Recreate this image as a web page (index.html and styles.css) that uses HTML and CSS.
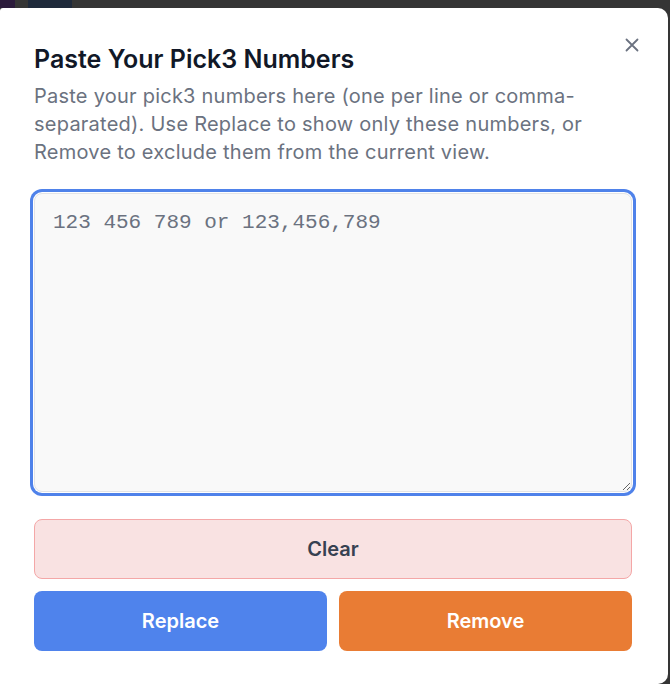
FILE: index.html
```html
<!DOCTYPE html>
<html lang="en">
<head>
<meta charset="utf-8">
<title>Paste Your Pick3 Numbers</title>
<link rel="stylesheet" href="styles.css">
</head>
<body>
<div class="backdrop">
  <div class="behind">
    <span class="chip chip-purple"></span>
    <span class="chip chip-navy"></span>
  </div>
  <div class="dialog" role="dialog" aria-labelledby="dlg-title">
    <button class="close" aria-label="Close">
      <svg width="16" height="16" viewBox="0 0 16 16" fill="none" stroke="#6b7280" stroke-width="1.8" stroke-linecap="round">
        <path d="M2.5 2.5 L13.5 13.5 M13.5 2.5 L2.5 13.5"/>
      </svg>
    </button>
    <h2 id="dlg-title" class="title">Paste Your Pick3 Numbers</h2>
    <p class="desc">Paste your pick3 numbers here (one per line or comma-separated). Use Replace to show only these numbers, or Remove to exclude them from the current view.</p>
    <textarea class="numbers" placeholder="123 456 789 or 123,456,789" autofocus></textarea>
    <div class="actions">
      <button class="btn btn-clear">Clear</button>
      <div class="row">
        <button class="btn btn-replace">Replace</button>
        <button class="btn btn-remove">Remove</button>
      </div>
    </div>
  </div>
</div>
</body>
</html>
```
FILE: styles.css
```css
html, body {
  margin: 0;
  padding: 0;
  background: #353535;
  height: 100%;
  overflow: hidden;
}
body {
  font-family: Inter, "Noto Sans", "Liberation Sans", sans-serif;
}
.backdrop {
  display: flex;
  flex-direction: column;
  height: 684px;
}
.behind {
  height: 8px;
  display: flex;
  flex: none;
}
.chip {
  display: block;
  height: 8px;
}
.chip-purple {
  width: 15px;
  background: #2b1b3b;
}
.chip-navy {
  width: 44px;
  margin-left: 13px;
  background: #1f2a3b;
}
.dialog {
  position: relative;
  flex: 1;
  width: 668px;
  box-sizing: border-box;
  background: #ffffff;
  border-radius: 3px 10px 10px 0;
  padding: 35px 36px 0 34px;
}
.close {
  position: absolute;
  top: 29px;
  right: 28px;
  width: 16px;
  height: 16px;
  padding: 0;
  border: 0;
  background: transparent;
  display: flex;
}
.title {
  margin: 0;
  font-size: 25px;
  line-height: 32px;
  font-weight: 600;
  color: #111827;
}
.desc {
  margin: 7px 0 0;
  font-size: 20px;
  line-height: 28px;
  letter-spacing: 0.24px;
  color: #6b7280;
}
.numbers {
  display: block;
  box-sizing: border-box;
  width: 100%;
  height: 299px;
  margin-top: 27px;
  padding: 15px 18px;
  border: 1px solid #e3e4e6;
  border-radius: 8px;
  background: #f9f9f9;
  font-family: "Liberation Mono", "DejaVu Sans Mono", monospace;
  font-size: 21px;
  line-height: 28px;
  color: #111827;
  outline: none;
  box-shadow: 0 0 0 1px #ffffff, 0 0 0 4px #4f82ea;
  resize: vertical;
}
.numbers::placeholder {
  color: #6b7280;
  opacity: 1;
}
.actions {
  margin-top: 27px;
  display: flex;
  flex-direction: column;
  gap: 12px;
}
.row {
  display: flex;
  gap: 12px;
}
.btn {
  font-family: Inter, "Noto Sans", "Liberation Sans", sans-serif;
  font-size: 20px;
  font-weight: 600;
  line-height: 28px;
  height: 60px;
  border-radius: 8px;
  border: 0;
  cursor: pointer;
}
.btn-clear {
  width: 100%;
  background: #f9e2e2;
  border: 1px solid #f4a7a7;
  color: #374151;
}
.btn-replace, .btn-remove {
  flex: 1;
  color: #ffffff;
}
.btn-replace {
  background: #4f83ec;
}
.btn-remove {
  background: #e97c34;
}
```
